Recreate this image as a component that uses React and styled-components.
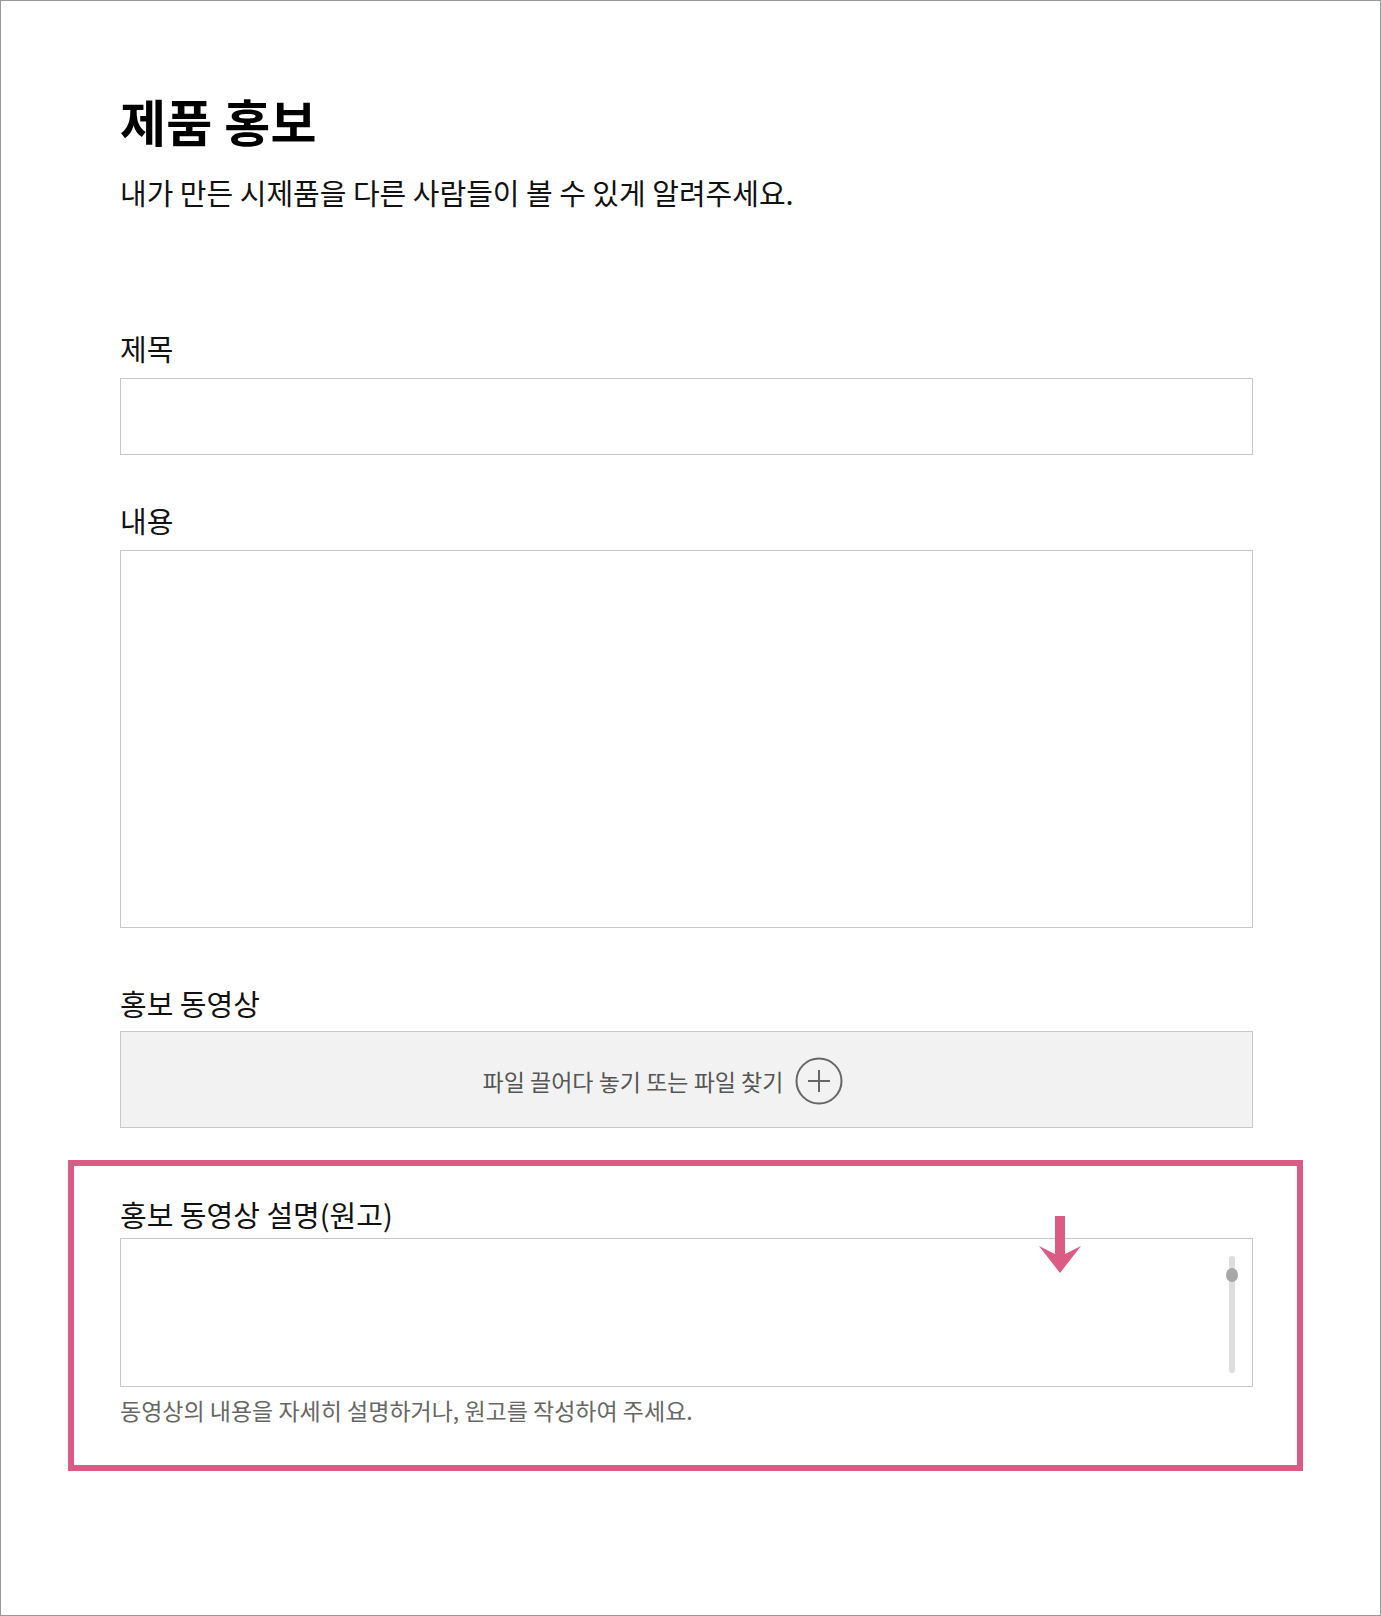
import styled, { createGlobalStyle } from "styled-components";

const GlobalStyle = createGlobalStyle`
  * {
    box-sizing: border-box;
  }

  body {
    margin: 0;
    background: #ffffff;
    font-family: "Noto Sans CJK KR", "Noto Sans", sans-serif;
    color: #111111;
  }
`;

const Page = styled.div`
  width: 1381px;
  height: 1616px;
  border: 1px solid #999999;
  padding: 95px 127px 0 119px;
  overflow: hidden;
`;

const Title = styled.h1`
  margin: 0;
  font-size: 50px;
  line-height: 48px;
  font-weight: 700;
  letter-spacing: 0.3px;
  color: #000000;
`;

const Lead = styled.p`
  margin: 35px 0 0;
  font-size: 29px;
  line-height: 26px;
  color: #111111;
`;

const Field = styled.div`
  display: flex;
  flex-direction: column;
  gap: ${(p) => p.$gap || 16}px;
  margin-top: ${(p) => p.$top}px;
`;

const Label = styled.label`
  font-size: 29px;
  line-height: 26px;
  color: #111111;
`;

const TextInput = styled.input`
  display: block;
  width: 100%;
  height: 77px;
  border: 1px solid #c8c8c8;
  padding: 0 20px;
  font: inherit;
  font-size: 22px;
  outline: none;
`;

const TextArea = styled.textarea`
  display: block;
  width: 100%;
  height: ${(p) => p.$height}px;
  border: 1px solid #c8c8c8;
  padding: 16px 20px;
  font: inherit;
  font-size: 22px;
  resize: none;
  outline: none;
  overflow: hidden;
`;

const DropZone = styled.div`
  height: 97px;
  border: 1px solid #c8c8c8;
  background: #f2f2f2;
  display: flex;
  align-items: center;
  justify-content: center;
  gap: 12px;
  padding: 3px 47px 0 0;
  color: #555555;
  font-size: 23px;
  cursor: pointer;
`;

const DropText = styled.span`
  line-height: 21px;
`;

const Highlight = styled.section`
  margin: 32px -50px 0 -52px;
  border: 6px solid #dc5b85;
  padding: 35px 44px 44px 46px;
`;

const AreaWrap = styled.div`
  position: relative;
`;

const Track = styled.div`
  position: absolute;
  right: 18px;
  top: 18px;
  width: 6px;
  height: 117px;
  border-radius: 3px;
  background: #dddddd;
`;

const Thumb = styled.div`
  position: absolute;
  left: -3px;
  top: 12px;
  width: 12px;
  height: 14px;
  border-radius: 50%;
  background: #a8a8a8;
`;

const Pointer = styled.svg`
  position: absolute;
  left: 917px;
  top: -22px;
`;

const Hint = styled.p`
  margin: 13px 0 0;
  font-size: 23px;
  line-height: 21px;
  color: #666666;
`;

const PlusIcon = () => (
  <svg width="48" height="48" viewBox="0 0 48 48" fill="none">
    <circle cx="24" cy="24" r="22.5" stroke="#666666" strokeWidth="2" />
    <path d="M24 13v22M13 24h22" stroke="#666666" strokeWidth="2" />
  </svg>
);

export default function App() {
  return (
    <>
      <GlobalStyle />
      <Page>
        <Title>제품 홍보</Title>
        <Lead>내가 만든 시제품을 다른 사람들이 볼 수 있게 알려주세요.</Lead>

        <Field $top={130} $gap={17}>
          <Label htmlFor="title">제목</Label>
          <TextInput id="title" />
        </Field>

        <Field $top={52} $gap={17}>
          <Label htmlFor="body">내용</Label>
          <TextArea id="body" $height={378} />
        </Field>

        <Field $top={62} $gap={15}>
          <Label>홍보 동영상</Label>
          <DropZone>
            <DropText>파일 끌어다 놓기 또는 파일 찾기</DropText>
            <PlusIcon />
          </DropZone>
        </Field>

        <Highlight>
          <Field $top={0} $gap={11}>
            <Label htmlFor="script">홍보 동영상 설명(원고)</Label>
            <AreaWrap>
              <TextArea id="script" $height={149} />
              <Track>
                <Thumb />
              </Track>
              <Pointer width="46" height="58" viewBox="0 0 46 58">
                <path
                  d="M18 0h10v38l16-8-21 27L2 30l16 8z"
                  fill="#dc5b85"
                />
              </Pointer>
            </AreaWrap>
          </Field>
          <Hint>동영상의 내용을 자세히 설명하거나, 원고를 작성하여 주세요.</Hint>
        </Highlight>
      </Page>
    </>
  );
}
